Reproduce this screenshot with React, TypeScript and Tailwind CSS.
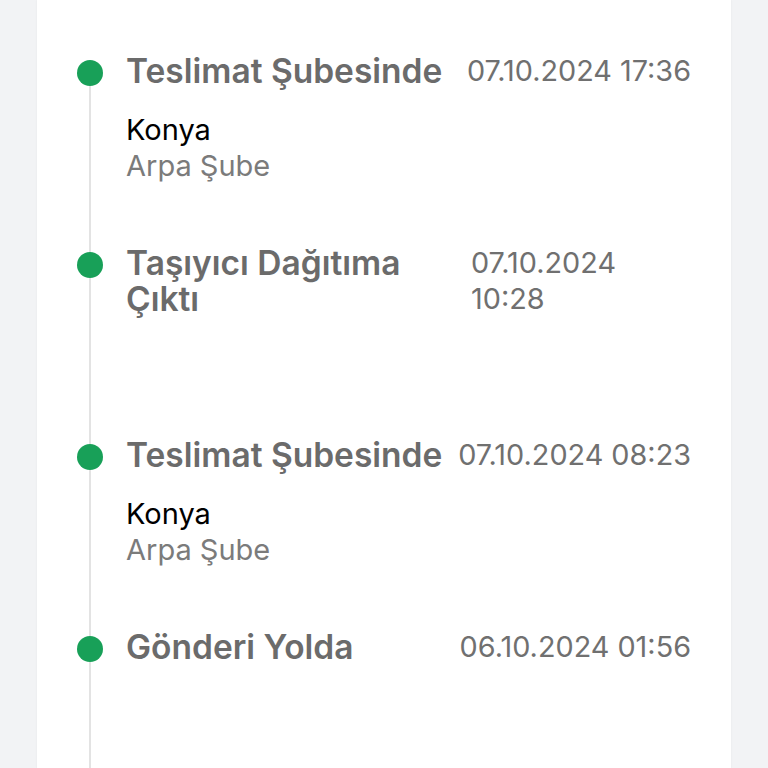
import React from "react";

type Item = {
  title: React.ReactNode;
  date: React.ReactNode;
  city?: string;
  branch?: string;
  wrap?: boolean;
};

const items: Item[] = [
  { title: "Teslimat Şubesinde", date: "07.10.2024 17:36", city: "Konya", branch: "Arpa Şube" },
  { title: "Taşıyıcı Dağıtıma Çıktı", date: "07.10.2024 10:28", wrap: true },
  { title: "Teslimat Şubesinde", date: "07.10.2024 08:23", city: "Konya", branch: "Arpa Şube" },
  { title: "Gönderi Yolda", date: "06.10.2024 01:56" },
];

export default function App() {
  return (
    <div
      className="w-[768px] h-[768px] overflow-hidden bg-[#f2f3f5] flex"
      style={{ fontFamily: "Inter, 'Noto Sans', sans-serif" }}
    >
      <div className="ml-[37px] w-[694px] h-full bg-white shadow-[0_0_2px_rgba(0,0,0,0.06)] px-10 flex flex-col">
        <div className="mt-[11px] h-[2px] bg-[#efefef]" />
        <div className="mt-[42px] flex flex-col">
          {items.map((it, i) => (
            <div key={i} className="h-[192px] flex">
              <div className="w-[26px] shrink-0 flex flex-col items-center">
                <div className={`h-[7px] w-[2px] ${i === 0 ? "bg-transparent" : "bg-[#e3e3e3]"}`} />
                <div className="w-[26px] h-[26px] rounded-full bg-[#18a058] shrink-0" />
                <div className="flex-1 w-[2px] bg-[#e3e3e3]" />
              </div>
              <div className="ml-[23px] flex-1 min-w-0 flex flex-col">
                <div className="flex justify-between gap-[12px]">
                  <div
                    className={`text-[33.5px] leading-[36px] font-semibold text-[#6b6b6b] ${
                      it.wrap ? "flex-1 min-w-0" : "whitespace-nowrap"
                    }`}
                  >
                    {it.title}
                  </div>
                  <div
                    className={`text-[28.8px] leading-[36px] text-[#707070] ${
                      it.wrap ? "w-[220px] shrink-0" : "whitespace-nowrap"
                    }`}
                  >
                    {it.date}
                  </div>
                </div>
                {it.city && (
                  <div className="mt-[23px] flex flex-col">
                    <div className="text-[29px] leading-[36px] text-black">{it.city}</div>
                    <div className="text-[29px] leading-[36px] text-[#7b7b7b]">{it.branch}</div>
                  </div>
                )}
              </div>
            </div>
          ))}
        </div>
      </div>
    </div>
  );
}
